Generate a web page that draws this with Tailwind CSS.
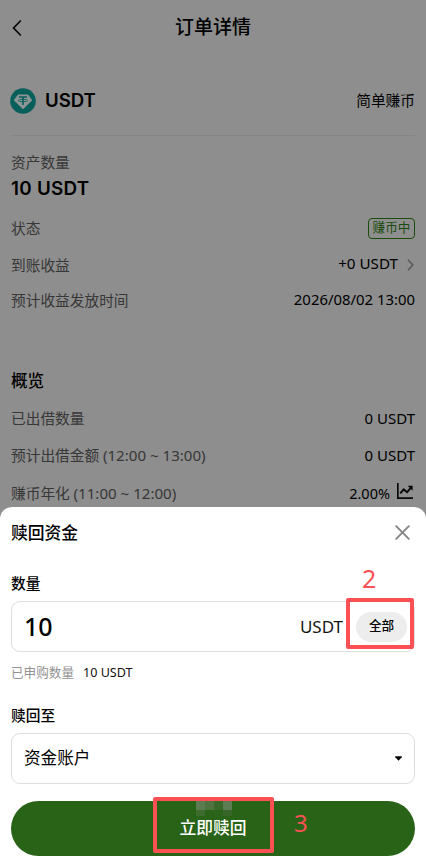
<!DOCTYPE html>
<html lang="zh-CN">
<head>
<meta charset="utf-8">
<meta name="viewport" content="width=device-width, initial-scale=1">
<title>订单详情</title>
<script src="https://cdn.jsdelivr.net/npm/@tailwindcss/browser@4"></script>
</head>
<body class="h-[859px] w-[426px] overflow-hidden bg-white font-['Noto_Sans','Noto_Sans_CJK_SC',sans-serif] text-[14.7px] leading-none text-black">
<div class="flex h-[859px] flex-col bg-[#8e8e8e]">
  <main class="h-[507px] shrink-0 px-[11px]">
    <header class="grid h-[54px] grid-cols-[60px_1fr_60px] items-center">
      <svg class="mt-0.5 h-[18px] w-3" viewBox="0 0 12 18" fill="none" stroke="#080808" stroke-width="1.7"><path d="M9.8 1.5 2.6 9l7.2 7.5"/></svg>
      <h1 class="text-center text-[19px] font-medium">订单详情</h1>
    </header>
    <section class="mt-[13px] flex h-[69px] items-center border-b border-[#868686]">
      <svg class="-ml-px h-[26px] w-[26px]" viewBox="0 0 26 26"><circle cx="13" cy="13" r="12.8" fill="#075f5c"/><path d="M8 6.5h10l4.2 5.7L13 21.2 3.8 12.2z" fill="#8e9695"/><path d="M8.9 9h8.2M13 9v8" stroke="#075f5c" stroke-width="1.6" fill="none"/><ellipse cx="13" cy="12.5" rx="4.8" ry="1.2" fill="none" stroke="#075f5c" stroke-width=".8"/></svg>
      <span class="-mt-px ml-[9px] font-['Inter'] text-[18.6px] font-semibold">USDT</span>
      <span class="-mt-px ml-auto">简单赚币</span>
    </section>
    <section class="mt-4">
      <div class="flex h-5 items-center text-[#373737]">资产数量</div>
      <div class="mt-[4px] flex h-[26px] items-center font-['Inter'] text-[18.8px] font-semibold tracking-[0.3px]">10 USDT</div>
      <div class="mt-[8px] flex h-[37px] items-center justify-between"><span class="text-[#373737]">状态</span><span class="flex h-[21px] w-[47px] items-center justify-center rounded-[4px] border border-[#194b0d] text-[12.6px] text-[#194b0d]">赚币中</span></div>
      <div class="flex h-9 items-center"><span class="text-[#373737]">到账收益</span><span class="-mt-0.5 ml-auto text-[15.2px]">+0 USDT</span><svg class="ml-[9px] mr-px h-3 w-[7px]" viewBox="0 0 7 12" fill="none" stroke="#555" stroke-width="1.4"><path d="m1 .8 4.8 5.2L1 11.2"/></svg></div>
      <div class="flex h-[34px] items-center justify-between"><span class="text-[#373737]">预计收益发放时间</span><span class="-mt-0.5 text-[14.9px]">2026/08/02 13:00</span></div>
    </section>
    <section class="mt-[49px]">
      <h2 class="flex h-[30px] items-center text-[16.6px] font-medium">概览</h2>
      <div class="mt-[4px] flex h-[37px] items-center justify-between"><span class="text-[#373737]">已出借数量</span><span class="text-[15px]">0 USDT</span></div>
      <div class="flex h-[37px] items-center justify-between"><span class="text-[#373737]">预计出借金额 <span class="text-[15.1px]">(12:00 ~ 13:00)</span></span><span class="text-[15px]">0 USDT</span></div>
      <div class="flex h-[38px] items-center"><span class="mt-px text-[#373737]">赚币年化 <span class="text-[15.1px]">(11:00 ~ 12:00)</span></span><span class="ml-auto text-[14.5px]">2.00%</span><svg class="mb-1 ml-[7px] mr-0.5 h-4 w-4" viewBox="0 0 16 16" fill="none" stroke="#080808" stroke-width="1.7"><path d="M.8 0v15.1H16"/><path d="m3.2 10.4 3.5-4 3.4 2.8L14 4.6" stroke-width="1.9"/><path d="M10.6 2.8h5v5z" fill="#080808" stroke="none"/></svg></div>
    </section>
  </main>
  <section class="flex h-[352px] shrink-0 flex-col rounded-t-[12px] bg-white px-[11px]">
    <header class="flex h-[51px] items-center justify-between"><h2 class="mt-px text-[16.8px] font-medium">赎回资金</h2><svg class="mr-[5px] h-[15px] w-[15px]" viewBox="0 0 15 15" stroke="#858585" stroke-width="1.9" stroke-linecap="round"><path d="m1.2 1.2 12.6 12.6M13.8 1.2 1.2 13.8"/></svg></header>
    <label class="mt-[15px] flex h-5 items-center font-medium">数量</label>
    <div class="mt-2 flex h-[51px] items-center rounded-[9px] border border-[#dedede] pl-3">
      <span class="text-[25px] font-medium">10</span>
      <span class="ml-auto text-[17px] text-[#151515]">USDT</span>
      <div class="relative ml-[13px] mr-[7px]">
        <button class="flex h-[30px] w-[51px] items-center justify-center rounded-full bg-[#ededed] text-[12.6px] font-medium">全部</button>
        <div class="absolute -left-2.5 -top-3.5 h-[51px] w-[68px] rounded-[2px] border-4 border-[#fb5154]"></div>
        <span class="absolute -top-[46px] left-[6px] text-[25px] text-[#fb5154]">2</span>
      </div>
    </div>
    <div class="mt-[11px] flex h-5 items-center text-[12.6px]"><span class="text-[#929292]">已申购数量</span><span class="ml-[9px] text-[#111]">10 USDT</span></div>
    <label class="mt-[22px] flex h-5 items-center font-medium">赎回至</label>
    <div class="mt-2 flex h-[51px] items-center justify-between rounded-[9px] border border-[#dedede] pl-3 pr-3"><span class="text-[16.6px]">资金账户</span><svg class="h-[5px] w-[7px]" viewBox="0 0 7 5"><path d="M.3.3h6.4v1L3.5 4.8.3 1.3z"/></svg></div>
    <div class="relative mt-[17px] h-[55px]">
      <button class="flex h-full w-full items-center justify-center rounded-full bg-[#296317] text-[16.8px] font-medium text-white">立即赎回</button>
      <div class="absolute left-[185px] top-0 grid grid-cols-[9px_9px_9px_9px]"><i class="h-[9px] bg-[#5b7b51]"></i><i class="h-[9px] bg-[#4e7341]"></i><i class="h-[9px] bg-[#38682a]"></i><i class="h-[9px] bg-[#5d7c53]"></i><i class="h-[6px] bg-[#3d6c2e]"></i><i class="h-[6px] bg-[#296317]"></i><i class="h-[6px] bg-[#2c641b]"></i><i class="h-[6px] bg-[#376829]"></i></div>
      <div class="absolute -top-1 left-[142px] h-14 w-[121px] rounded-[2px] border-4 border-[#fb5154]"></div>
      <span class="absolute left-[283px] top-[10px] text-[24px] text-[#fb5154]">3</span>
    </div>
  </section>
</div>
</body>
</html>
